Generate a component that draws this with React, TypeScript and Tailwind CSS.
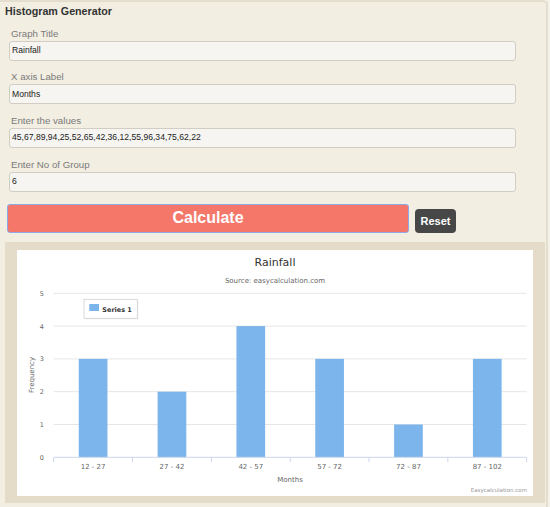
import React from "react";

const fields = [
  { label: "Graph Title", value: "Rainfall" },
  { label: "X axis Label", value: "Months" },
  { label: "Enter the values", value: "45,67,89,94,25,52,65,42,36,12,55,96,34,75,62,22" },
  { label: "Enter No of Group", value: "6" },
];

const cats = ["12 - 27", "27 - 42", "42 - 57", "57 - 72", "72 - 87", "87 - 102"];
const vals = [3, 2, 4, 3, 1, 3];

function Chart() {
  const left = 36.7;
  const right = 509.7;
  const y0 = 207.3;
  const step = 32.8;
  const cw = (right - left) / 6;
  const bw = 28.7;
  return (
    <svg width="516" height="246" viewBox="0 0 516 246" style={{ fontFamily: "'DejaVu Sans', Verdana, sans-serif" }}>
      <text x="258" y="16" textAnchor="middle" fontSize="11" fill="#333">Rainfall</text>
      <text x="258" y="33" textAnchor="middle" fontSize="7" fill="#666">Source: easycalculation.com</text>
      {[1, 2, 3, 4, 5].map((v) => (
        <line key={v} x1={left} x2={right} y1={y0 - v * step} y2={y0 - v * step} stroke="#e6e6e6" strokeWidth="1" />
      ))}
      {[0, 1, 2, 3, 4, 5].map((v) => (
        <text key={v} x="27" y={y0 - v * step + 2.5} textAnchor="end" fontSize="6.5" fill="#666">{v}</text>
      ))}
      {vals.map((v, i) => (
        <rect key={i} x={left + i * cw + (cw - bw) / 2} y={y0 - v * step} width={bw} height={v * step} fill="#7cb5ec" />
      ))}
      <line x1={left} x2={right} y1={y0} y2={y0} stroke="#ccd6eb" strokeWidth="1" />
      {[0, 1, 2, 3, 4, 5, 6].map((i) => (
        <line key={i} x1={left + i * cw} x2={left + i * cw} y1={y0} y2={y0 + 5} stroke="#ccd6eb" strokeWidth="1" />
      ))}
      {cats.map((c, i) => (
        <text key={c} x={left + i * cw + cw / 2} y="219" textAnchor="middle" fontSize="7" fill="#666">{c}</text>
      ))}
      <text x="273" y="232" textAnchor="middle" fontSize="7" fill="#666">Months</text>
      <text x="16.5" y="125" textAnchor="middle" fontSize="7" fill="#666" transform="rotate(-90 16.5 125)">Frequency</text>
      <rect x="68" y="50.3" width="53.3" height="19" fill="#000" opacity="0.07" />
      <rect x="67" y="49.3" width="53.3" height="19" fill="#fff" stroke="#d0d0d0" strokeWidth="0.8" />
      <rect x="72.3" y="54" width="9.7" height="7" fill="#7cb5ec" />
      <text x="85.3" y="61.5" fontSize="6.5" fontWeight="bold" fill="#333">Series 1</text>
      <text x="510" y="242.3" textAnchor="end" fontSize="5.5" fill="#999">Easycalculation.com</text>
    </svg>
  );
}

export default function App() {
  return (
    <div className="w-[550px] h-[507px] overflow-hidden bg-[#f4f1e8] font-['Liberation_Sans',Arial,sans-serif]">
      <div className="w-[548px] h-[520px] bg-[#f2eee2] border-t-2 border-r-2 border-[#e4dece] rounded-tr-[5px]">
        <div className="pl-[5px] pt-[2px] text-[10.7px] leading-[14px] font-bold text-[#333]">Histogram Generator</div>
        <div className="pl-[9px] mt-[9.5px] flex flex-col gap-[10.7px]">
          {fields.map((f) => (
            <div key={f.label} className="flex flex-col">
              <div className="pl-[2px] text-[9.7px] leading-[12px] text-[#7a7a7a]">{f.label}</div>
              <div className="mt-[1px] h-[20px] w-[507px] bg-[#f6f5f2] border border-[#d2cdc3] rounded-[3px] pl-[2px] flex items-center text-[8.6px] text-[#222]">
                {f.value}
              </div>
            </div>
          ))}
        </div>
        <div className="pl-[7px] mt-[12.4px] flex items-end">
          <div className="w-[402px] h-[29px] bg-[#f4776a] border-[1.5px] border-[#8ea8e6] rounded-[3px] flex items-center justify-center text-white font-bold text-[16px]">
            Calculate
          </div>
          <div className="ml-[6px] w-[41px] h-[24px] bg-[#474747] rounded-[4px] flex items-center justify-center text-white font-bold text-[11px]">
            Reset
          </div>
        </div>
        <div className="ml-[5px] mt-[9px] w-[540px] h-[261px] bg-[#e4dcc9] pt-[8px] pl-[12px]">
          <div className="w-[516px] h-[246px] bg-white">
            <Chart />
          </div>
        </div>
      </div>
    </div>
  );
}
